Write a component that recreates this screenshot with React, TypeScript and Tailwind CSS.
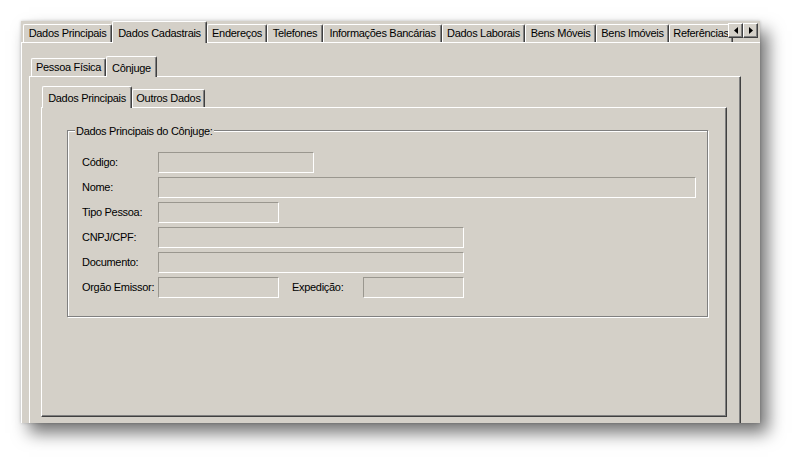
import React from 'react';

type TabDef = { label: string; w: string; active?: boolean };

const outerTabs: TabDef[] = [
  { label: 'Dados Principais', w: 'w-[89px]' },
  { label: 'Dados Cadastrais', w: 'w-[95px]', active: true },
  { label: 'Endereços', w: 'w-[60px]' },
  { label: 'Telefones', w: 'w-[56px]' },
  { label: 'Informações Bancárias', w: 'w-[119px]' },
  { label: 'Dados Laborais', w: 'w-[83px]' },
  { label: 'Bens Móveis', w: 'w-[71px]' },
  { label: 'Bens Imóveis', w: 'w-[73px]' },
  { label: 'Referências', w: 'w-[64px]' },
];

const innerTabs: TabDef[] = [
  { label: 'Pessoa Física', w: 'w-[75px]' },
  { label: 'Cônjuge', w: 'w-[51px]', active: true },
];

const pageTabs: TabDef[] = [
  { label: 'Dados Principais', w: 'w-[90px]', active: true },
  { label: 'Outros Dados', w: 'w-[73px]' },
];

// classic win32 tab: active one is taller and hides the page's top edge
function Tab({ tab, tall }: { tab: TabDef; tall: string }) {
  if (tab.active) {
    return (
      <div
        className={`${tab.w} ${tall} relative z-10 -mb-px flex shrink-0 items-start justify-center whitespace-nowrap rounded-t-[2px] border-l border-t border-r border-white border-r-[#404040] bg-[#d4d0c8] pt-[3px] shadow-[inset_-1px_0_0_#808080]`}
      >
        {tab.label}
      </div>
    );
  }
  return (
    <div
      className={`${tab.w} flex h-[18px] shrink-0 items-center justify-center overflow-hidden whitespace-nowrap rounded-t-[2px] border-l border-t border-r border-white border-r-[#404040] shadow-[inset_-1px_0_0_#808080]`}
    >
      {tab.label}
    </div>
  );
}

function ArrowButton({ dir }: { dir: 'left' | 'right' }) {
  return (
    <div className="flex h-[15px] w-[15px] items-center justify-center border border-white border-r-[#404040] border-b-[#404040] bg-[#d4d0c8] shadow-[inset_-1px_-1px_0_#808080]">
      <svg width="4" height="7" viewBox="0 0 4 7">
        {dir === 'left' ? <polygon points="4,0 4,7 0,3.5" fill="#000" /> : <polygon points="0,0 0,7 4,3.5" fill="#000" />}
      </svg>
    </div>
  );
}

function Field({ w }: { w: string }) {
  return <div className={`${w} h-[21px] shrink-0 border border-[#9a978f] border-b-white border-r-white bg-[#d4d0c8]`} />;
}

function Row({ label, w }: { label: string; w: string }) {
  return (
    <div className="flex h-[21px] items-center">
      <span className="w-[76px] shrink-0">{label}</span>
      <Field w={w} />
    </div>
  );
}

export default function App() {
  return (
    <div className="h-[466px] w-[802px] bg-white pl-[21px] pt-[21px] font-['Liberation_Sans',Arial,sans-serif] text-[11px] tracking-[-0.3px] text-black">
      <div className="flex h-[402px] w-[739px] flex-col overflow-hidden bg-[#d4d0c8] shadow-[8px_10px_16px_rgba(0,0,0,0.55),0_0_3px_rgba(0,0,0,0.2)]">
        {/* main tab strip */}
        <div className="relative flex h-[21px] shrink-0 items-end pl-[2px]">
          {outerTabs.map((t) => (
            <Tab key={t.label} tab={t} tall="h-[22px]" />
          ))}
          <div className="absolute right-[2px] top-[2px] z-20 flex">
            <ArrowButton dir="left" />
            <ArrowButton dir="right" />
          </div>
        </div>

        <div className="flex-1 border-l border-t border-white pl-[7px] pt-[13px]">
          {/* Pessoa Física / Cônjuge */}
          <div className="flex h-[20px] items-end pl-[2px]">
            {innerTabs.map((t) => (
              <Tab key={t.label} tab={t} tall="h-[21px]" />
            ))}
          </div>
          <div className="h-[400px] w-[712px] border-l border-t border-r border-white border-r-[#404040] pl-[11px] pt-[9px] shadow-[inset_-1px_0_0_#808080]">
            <div className="flex h-[21px] items-end pl-[1px]">
              {pageTabs.map((t) => (
                <Tab key={t.label} tab={t} tall="h-[22px]" />
              ))}
            </div>
            <div className="h-[310px] w-[686px] border border-white border-r-[#404040] border-b-[#404040] pl-[25px] pt-[22px] shadow-[inset_-1px_-1px_0_#808080]">
              {/* group box */}
              <div className="relative h-[187px] w-[641px] border border-[#808080] pl-[14px] pt-[21px] shadow-[inset_1px_1px_0_#fff,1px_1px_0_#fff]">
                <span className="absolute -top-[8px] left-[7px] bg-[#d4d0c8] px-[1px]">Dados Principais do Cônjuge:</span>
                <div className="flex flex-col gap-[4px]">
                  <Row label="Código:" w="w-[156px]" />
                  <Row label="Nome:" w="w-[538px]" />
                  <Row label="Tipo Pessoa:" w="w-[121px]" />
                  <Row label="CNPJ/CPF:" w="w-[306px]" />
                  <Row label="Documento:" w="w-[306px]" />
                  <div className="flex h-[21px] items-center">
                    <span className="w-[76px] shrink-0">Orgão Emissor:</span>
                    <Field w="w-[121px]" />
                    <span className="ml-[13px] w-[71px] shrink-0">Expedição:</span>
                    <Field w="w-[101px]" />
                  </div>
                </div>
              </div>
            </div>
          </div>
        </div>
      </div>
    </div>
  );
}
